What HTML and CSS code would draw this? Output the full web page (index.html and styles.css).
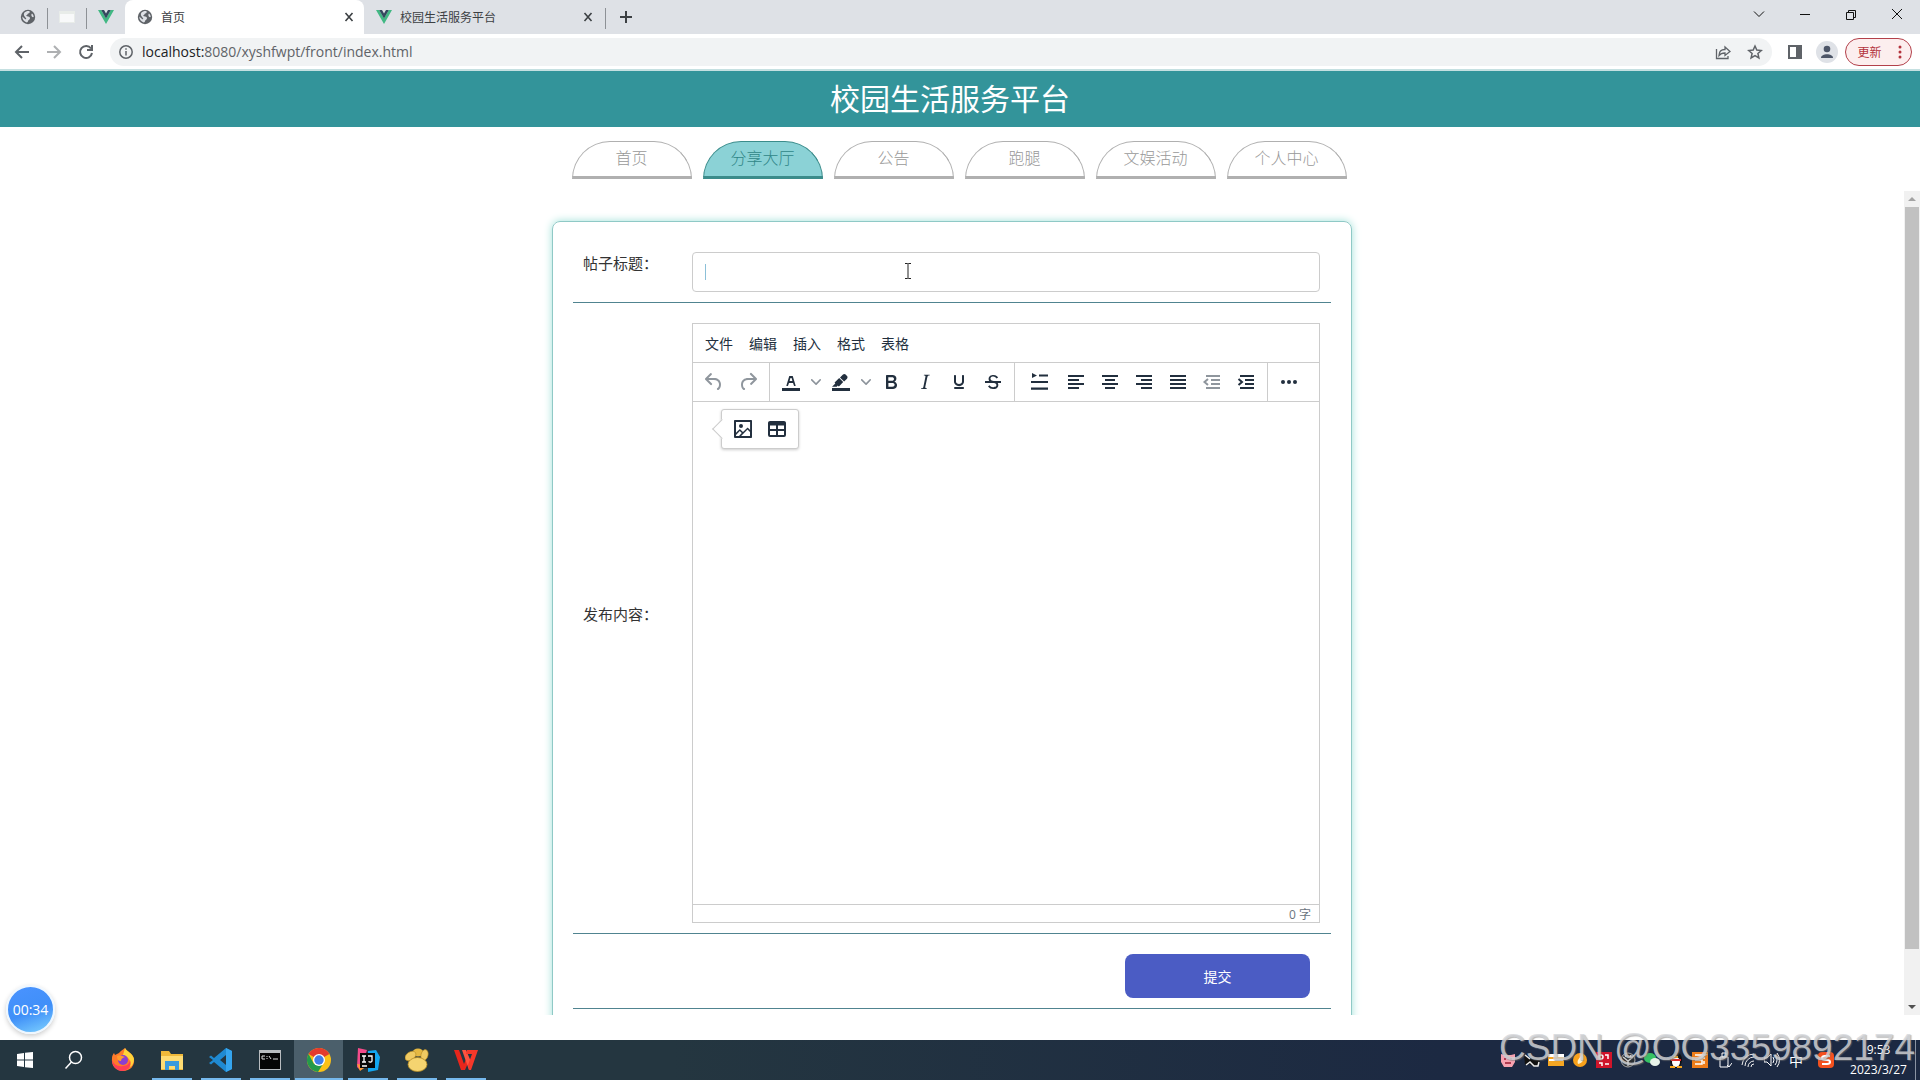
FILE: index.html
```html
<!DOCTYPE html>
<html lang="zh-CN">
<head>
<meta charset="utf-8">
<title>首页</title>
<link rel="stylesheet" href="styles.css">
</head>
<body>
<svg class="defs" aria-hidden="true">
  <symbol id="globe" viewBox="0 0 16 16"><circle cx="8" cy="8" r="7.200" fill="#5f6368"/><path d="M9.500 2.200c.8 1.200-.3 2-1.300 2.300-.8.300-.5 1.300-1.400 1.500-.8.200-.6 1 .2 1.200 1.500.2 3 .3 3 2 0 1.500-1.600 1.400-1.900 2.600-.2.900-.6 1.600-1.300 1.700C4 12.800 2.200 10.600 2.300 7.600L5 10c.8.600 1.400.2 1.200-.6L4.500 7.200C3.800 6.300 3.600 5 4.300 3.800 5.600 2.500 7.500 1.900 9.500 2.200z" fill="#dee1e6"/><path d="M12 4.500c1 .8 1.700 2 1.700 3.500-1 .5-2-.2-2.200-1.200-.2-.9-.2-1.700.5-2.300z" fill="#dee1e6"/></symbol>
  <symbol id="vue" viewBox="0 0 16 16"><path d="M0 1h3.200L8 9.300 12.800 1H16L8 15z" fill="#41b883"/><path d="M3.200 1H6l2 3.500L10 1h2.800L8 9.500z" fill="#34495e"/></symbol>
  <symbol id="close" viewBox="0 0 16 16"><path d="M4.500 4l7 8m0-8l-7 8" stroke="#3c4043" stroke-width="1.600" fill="none"/></symbol>
  <symbol id="chevron" viewBox="0 0 10 10"><path d="M8.700 2.200c.3-.3.8-.3 1 0 .4.400.4.900 0 1.200L5.700 7.800c-.3.300-.9.300-1.200 0L.2 3.400a.8.800 0 010-1.200c.3-.3.8-.3 1.100 0L5 6l3.700-3.800z"/></symbol>
</svg>

<header class="tabstrip">
  <div class="pinned"><svg><use href="#globe"/></svg></div>
  <div class="pinned"><svg viewBox="0 0 16 16"><path d="M0 2h16v12H0z" fill="#e8ece9"/><path d="M1 5h14v8H1z" fill="#f8f9fa"/></svg></div>
  <div class="pinned last"><svg><use href="#vue"/></svg></div>
  <div class="tab active"><svg><use href="#globe"/></svg><span>首页</span><button aria-label="关闭"><svg><use href="#close"/></svg></button></div>
  <div class="tab"><svg><use href="#vue"/></svg><span>校园生活服务平台</span><button aria-label="关闭"><svg><use href="#close"/></svg></button></div>
  <button class="newtab" aria-label="新标签页"><svg viewBox="0 0 16 16"><path d="M8 2v12M2 8h12" stroke="#3c4043" stroke-width="2"/></svg></button>
  <div class="winctl">
    <button aria-label="标签搜索"><svg viewBox="0 0 16 16"><path d="M3 5.500l5 5 5-5"/></svg></button>
    <button aria-label="最小化"><svg viewBox="0 0 16 16"><path d="M3 8.500h10"/></svg></button>
    <button aria-label="还原"><svg viewBox="0 0 16 16"><path d="M3.500 6.500h7v7h-7zM5.500 6.500v-2h7v7h-2"/></svg></button>
    <button aria-label="关闭窗口"><svg viewBox="0 0 16 16"><path d="M3 3l10 10M13 3L3 13"/></svg></button>
  </div>
</header>

<div class="toolbar">
  <button aria-label="后退"><svg viewBox="0 0 16 16"><path d="M15 8H2m6-6L2 8l6 6"/></svg></button>
  <button aria-label="前进" disabled><svg viewBox="0 0 16 16"><path d="M1 8h13M8 2l6 6-6 6"/></svg></button>
  <button aria-label="刷新"><svg viewBox="0 0 16 16"><path d="M13 4.500A6 6 0 1 0 14 9M14 1v5H9"/></svg></button>
  <div class="omnibox">
    <svg viewBox="0 0 16 16"><circle cx="8" cy="8" r="6.200"/><path d="M8 7v4.500M8 4.300v1.500"/></svg>
    <div class="url"><b>localhost:</b>8080/xyshfwpt/front/index.html</div>
    <svg viewBox="0 0 16 16"><path d="M1.500 5v9.500h11.500V12M4 11.500c0-4 2.500-6 6-6V3l5 4.500-5 4V9c-2.500 0-4.500.5-6 2.500z" stroke-width="1.300"/></svg>
    <svg viewBox="0 0 16 16"><path d="M8 2l1.800 4.100 4.500.4-3.400 3 1 4.400L8 11.600l-3.900 2.300 1-4.400-3.400-3 4.500-.4z"/></svg>
  </div>
  <button class="side" aria-label="侧边栏"><svg viewBox="0 0 16 16"><path d="M2 2h12v12H2z"/><path d="M10 2h4v12h-4z" fill="#5f6368"/></svg></button>
  <button class="profile" aria-label="用户"><svg viewBox="0 0 22 22"><circle cx="11" cy="11" r="11" fill="#dfe2e7"/><circle cx="11" cy="8" r="3.300" fill="#4d5668"/><path d="M5 17c0-5 12-5 12 0z" fill="#4d5668"/></svg></button>
  <button class="update"><span>更新</span><svg viewBox="0 0 4 16"><circle cx="2" cy="3" r="1.500"/><circle cx="2" cy="8" r="1.500"/><circle cx="2" cy="13" r="1.500"/></svg></button>
</div>

<main class="page">
  <h1>校园生活服务平台</h1>
  <nav class="nav">
    <a href="#">首页</a><a href="#" class="on">分享大厅</a><a href="#">公告</a><a href="#">跑腿</a><a href="#">文娱活动</a><a href="#">个人中心</a>
  </nav>
  <div class="frame">
    <form class="card">
      <div class="row title-row">
        <label for="post-title">帖子标题：</label>
        <div class="field"><input id="post-title" type="text"><i class="caret"></i>
          <svg class="ibeam" viewBox="0 0 8 18"><path d="M1 1.500h2.500l.5.500.5-.5H7M4 2v14M1 16.500h2.500l.5-.5.5.5H7" fill="none" stroke="#222"/></svg></div>
      </div>
      <div class="row body-row">
        <label for="post-body">发布内容：</label>
        <div class="editor">
          <div class="menubar"><button type="button">文件</button><button type="button">编辑</button><button type="button">插入</button><button type="button">格式</button><button type="button">表格</button></div>
          <div class="tools">
            <div class="group">
              <button type="button" disabled aria-label="撤销"><svg viewBox="0 0 24 24"><path d="M6.400 8H12c3.700 0 6.200 2 6.800 5.100.6 2.700-.4 5.600-2.300 6.800a1 1 0 01-1-1.800c1.100-.6 1.800-2.700 1.400-4.600-.5-2.100-2.100-3.500-4.900-3.500H6.400l3.300 3.300a1 1 0 11-1.400 1.400l-5-5a1 1 0 010-1.400l5-5a1 1 0 011.400 1.400L6.400 8z"/></svg></button>
              <button type="button" disabled aria-label="重做"><svg viewBox="0 0 24 24"><path d="M17.600 10H12c-2.800 0-4.400 1.400-4.900 3.500-.4 2 .3 4 1.400 4.600a1 1 0 11-1 1.800c-2-1.200-2.900-4.100-2.300-6.800.6-3 3-5.100 6.800-5.100h5.600l-3.300-3.300a1 1 0 111.400-1.400l5 5a1 1 0 010 1.400l-5 5a1 1 0 01-1.400-1.400l3.300-3.300z"/></svg></button>
            </div>
            <div class="group">
              <button type="button" aria-label="文字颜色"><svg viewBox="0 0 24 24"><path d="M3 18h18v3H3z"/><path d="M8.700 16h-.8a.5.500 0 01-.5-.6l2.700-9c.1-.3.3-.4.5-.4h2.800c.2 0 .4.100.5.400l2.700 9a.5.500 0 01-.5.600h-.8a.5.500 0 01-.4-.4l-.7-2.200c0-.3-.3-.4-.5-.4h-3.400c-.2 0-.4.100-.5.400l-.7 2.200c0 .3-.2.400-.4.400zm2.600-7.600l-.6 2a.5.500 0 00.5.600h1.600a.5.500 0 00.5-.6l-.6-2c0-.3-.3-.4-.5-.4h-.4c-.2 0-.4.100-.5.400z"/></svg></button>
              <button type="button" class="drop" aria-label="选择文字颜色"><svg><use href="#chevron"/></svg></button>
              <button type="button" aria-label="背景色"><svg viewBox="0 0 24 24"><path d="M3 18h18v3H3z"/><path d="M7.700 16.700H3l3.300-3.300-.7-.8L10.200 8l4 4.100-4 4.200c-.2.2-.6.2-.8 0l-.6-.7-1.100 1.100zm5-7.500L11 7.400l3-2.900a2 2 0 012.600 0L18 6c.7.7.7 2 0 2.700l-2.900 2.900-1.800-1.800-.5-.6"/></svg></button>
              <button type="button" class="drop" aria-label="选择背景色"><svg><use href="#chevron"/></svg></button>
              <button type="button" aria-label="粗体"><svg viewBox="0 0 24 24"><path d="M7.800 19c-.3 0-.5 0-.6-.2l-.2-.5V5.700c0-.2 0-.4.2-.5l.6-.2h5c1.500 0 2.700.3 3.500 1 .7.600 1.100 1.400 1.100 2.500a3 3 0 01-.6 1.900c-.4.600-1 1-1.600 1.200.4.100.9.300 1.300.6s.8.700 1 1.200c.4.400.5 1 .5 1.600 0 1.300-.4 2.300-1.300 3-.8.700-2.100 1-3.800 1H7.800zm5-8.300c.6 0 1.200-.1 1.600-.5.400-.3.600-.7.600-1.300 0-1.100-.8-1.700-2.300-1.700H9.300v3.500h3.400zm.5 6c.7 0 1.300-.1 1.700-.4.400-.4.600-.9.600-1.500s-.2-1-.7-1.400c-.4-.3-1-.4-2-.4H9.400v3.800h4z"/></svg></button>
              <button type="button" aria-label="斜体"><svg viewBox="0 0 24 24"><path d="M16.700 4.700l-.1.900h-.3c-.6 0-1 0-1.400.3-.3.300-.4.600-.5 1.100l-2.100 9.800v.6c0 .5.400.8 1.400.8h.2l-.2.800H8l.2-.8h.2c1.100 0 1.800-.5 2-1.500l2-9.800.1-.5c0-.6-.4-.8-1.400-.8h-.3l.2-.9h5.800z"/></svg></button>
              <button type="button" aria-label="下划线"><svg viewBox="0 0 24 24"><path d="M16 5c.6 0 1 .4 1 1v5.500a4 4 0 01-.4 1.800l-1 1.400a5.300 5.300 0 01-5.500 1 5 5 0 01-1.600-1c-.5-.4-.8-.9-1.100-1.400a4 4 0 01-.4-1.800V6c0-.6.4-1 1-1s1 .4 1 1v5.500c0 .3 0 .6.2 1l.6.700a3.300 3.300 0 002.200.8 3.400 3.400 0 002.200-.8c.3-.2.400-.5.600-.8l.2-.9V6c0-.6.4-1 1-1zM8 17h8c.6 0 1 .4 1 1s-.4 1-1 1H8a1 1 0 010-2z"/></svg></button>
              <button type="button" aria-label="删除线"><svg viewBox="0 0 24 24"><path d="M15.600 8.500c-.5-.7-1-1.100-1.300-1.300-.6-.4-1.300-.6-2-.6-2.700 0-2.800 1.700-2.800 2.100 0 1.600 1.800 2 3.200 2.300 4.400.9 4.600 2.800 4.600 3.900 0 1.400-.7 4.100-5 4.100A6.200 6.200 0 017 16.400l1.500-1.100c.4.600 1.600 2 3.700 2 1.600 0 2.500-.4 3-1.200.4-.8.3-2-.8-2.600-.7-.4-1.600-.7-2.900-1-1-.2-3.900-.8-3.900-3.600C7.600 6 10.300 5 12.400 5c2.900 0 4.200 1.600 4.700 2.400l-1.500 1.100z"/><path d="M4 11h16v2H4z"/></svg></button>
            </div>
            <div class="group">
              <button type="button" class="wide" aria-label="首行缩进"><svg viewBox="0 0 24 24"><path d="M5 3l5 2.500L5 8zM12 4.500h9v2h-9zM4 11h17v2H4zM4 17.500h17v2.200H4z"/></svg></button>
              <button type="button" aria-label="左对齐"><svg viewBox="0 0 24 24"><path d="M4 5h16v2H4zM4 9h11v2H4zM4 13h16v2H4zM4 17h11v2H4z"/></svg></button>
              <button type="button" aria-label="居中对齐"><svg viewBox="0 0 24 24"><path d="M4 5h16v2H4zM7 9h10v2H7zM4 13h16v2H4zM7 17h10v2H7z"/></svg></button>
              <button type="button" aria-label="右对齐"><svg viewBox="0 0 24 24"><path d="M4 5h16v2H4zM9 9h11v2H9zM4 13h16v2H4zM9 17h11v2H9z"/></svg></button>
              <button type="button" aria-label="两端对齐"><svg viewBox="0 0 24 24"><path d="M4 5h16v2H4zM4 9h16v2H4zM4 13h16v2H4zM4 17h16v2H4z"/></svg></button>
              <button type="button" disabled aria-label="减少缩进"><svg viewBox="0 0 24 24"><path d="M6 5h14v2H6zM11 9h9v2h-9zM11 13h9v2h-9zM6 17h14v2H6z"/><path d="M8 9l-3.500 3L8 15" fill="none" stroke="#222f3e" stroke-width="2"/></svg></button>
              <button type="button" aria-label="增加缩进"><svg viewBox="0 0 24 24"><path d="M6 5h14v2H6zM11 9h9v2h-9zM11 13h9v2h-9zM6 17h14v2H6z"/><path d="M4.500 9L8 12l-3.500 3" fill="none" stroke="#222f3e" stroke-width="2"/></svg></button>
            </div>
            <div class="group">
              <button type="button" aria-label="更多"><svg viewBox="0 0 24 24"><circle cx="6" cy="12" r="2"/><circle cx="12" cy="12" r="2"/><circle cx="18" cy="12" r="2"/></svg></button>
            </div>
          </div>
          <div class="canvas">
            <textarea id="post-body"></textarea>
            <div class="quick">
              <button type="button" aria-label="插入图片"><svg viewBox="0 0 24 24"><path fill-rule="evenodd" d="M5 15.700l3.300-3.200c.3-.3.7-.3 1 0L12 15l4.100-4c.3-.4.8-.4 1 0l2 1.900V5H5v10.700zM5 18V19h3l2.800-2.900-2-2L5 17.900zm14-3l-2.500-2.400-6.400 6.500H19v-4zM4 3h16c.6 0 1 .4 1 1v16c0 .6-.4 1-1 1H4a1 1 0 01-1-1V4c0-.6.4-1 1-1zm6 8a2 2 0 100-4 2 2 0 000 4z"/></svg></button>
              <button type="button" aria-label="插入表格"><svg viewBox="0 0 24 24"><path fill-rule="evenodd" d="M5 4h14c1.100 0 2 .9 2 2v12a2 2 0 01-2 2H5a2 2 0 01-2-2V6c0-1.100.9-2 2-2zM5 14v4h6v-4zM13 14v4h6v-4zM5 8.500V12h6V8.500zM13 8.500V12h6V8.500z"/></svg></button>
            </div>
          </div>
          <div class="status">0 字</div>
        </div>
      </div>
      <div class="row submit-row"><button type="submit">提交</button></div>
    </form>
    <div class="scrollbar"><i class="arrow up"></i><i class="thumb"></i><i class="arrow down"></i></div>
  </div>
</main>

<footer class="taskbar">
  <div class="apps">
    <button aria-label="开始"><svg viewBox="0 0 24 24"><path d="M4 6l7-1v6.500H4zM12 4.800L20 4v7.500h-8zM4 12.500h7V19l-7-1zM12 12.500h8V20l-8-.8z" fill="#fff"/></svg></button>
    <button aria-label="搜索"><svg viewBox="0 0 24 24"><circle cx="13.500" cy="9.500" r="6" fill="none" stroke="#fff" stroke-width="1.500"/><path d="M9.500 14l-6 6.500" stroke="#fff" stroke-width="1.500"/></svg></button>
    <button aria-label="Firefox"><svg viewBox="0 0 24 24"><path d="M14 0c1 3 8 5 9 11 1 7-4 12-11 12S0 18 1 10c0-2 1-4 2-5l1 2 4-2c1-2 4-3 6-5z" fill="#ff7a2a"/><path d="M14 0c1 3 8 5 9 11 0 4-2 7-4 8 2-7-2-10-7-12z" fill="#ffd43a"/><path d="M1 12c2 5 6 7 11 6 4 0 7-3 7-6 2 7-3 11-8 11S1 18 1 12z" fill="#ff3f56"/><circle cx="12" cy="12" r="5" fill="#8b3fd0"/><path d="M6 8c3-1 5 0 8 1-3 1-4 2-4 4-3 0-4-2-4-5z" fill="#ff9b2c"/></svg></button>
    <button class="open" aria-label="文件资源管理器"><svg viewBox="0 0 24 24"><path d="M1 3h8l2 3h12v16H1z" fill="#f0b93a"/><path d="M1 8h22v13H1z" fill="#ffdc73"/><path d="M5 13h14v9h-4v-4H9v4H5z" fill="#3b9bdc"/></svg></button>
    <button class="open" aria-label="VS Code"><svg viewBox="0 0 24 24"><path d="M17 0l6 3v18l-6 3L5 14l-3 2.500L0 15l4-3-4-3 2-1.500L5 10zM17 7l-6 5 6 5z" fill="#1f8ad2"/><path d="M17 0l6 3v18l-6 3z" fill="#35a5ee"/></svg></button>
    <button class="open" aria-label="命令提示符"><svg viewBox="0 0 24 24"><path d="M1 2h22v20H1z" fill="#b9bdc0"/><path d="M2 5h20v16H2z" fill="#050505"/><path d="M7 8H4v3h3M9 8v1m0 1v1M11 8l2 3M15 11h5" stroke="#ddd" fill="none"/></svg></button>
    <button class="open current" aria-label="Chrome"><svg viewBox="0 0 24 24"><circle cx="12" cy="12" r="12" fill="#fbc116"/><path d="M12 12L1.600 6a12 12 0 0120.800 0z" fill="#e33b2e"/><path d="M12 12L7 16 1.600 6a12 12 0 009.400 18l5-8z" fill="#249a4b"/><circle cx="12" cy="12" r="6" fill="#fff"/><circle cx="12" cy="12" r="4.700" fill="#3f7ee8"/></svg></button>
    <button class="open" aria-label="IntelliJ IDEA"><svg viewBox="0 0 24 24"><path d="M2 0l9 2-7 20-3-3z" fill="#f44b8a"/><path d="M12 3l8-1 4 7-2 13-10 2z" fill="#12a6f0"/><path d="M1 16l10 2-7 5z" fill="#ff9a35"/><path d="M4 5h15v15H4z" fill="#080808"/><path d="M6 8h4M8 8v6M6 14h4M12 8h4v5c0 1-2 1.500-3.500.5M6 18h5" stroke="#fff" stroke-width="1.300" fill="none"/></svg></button>
    <button class="open" aria-label="数据库工具"><svg viewBox="0 0 24 24"><ellipse cx="13" cy="4.500" rx="5.500" ry="4" fill="#e5b842"/><ellipse cx="5.500" cy="8" rx="6" ry="4" transform="rotate(-35 5.500 8)" fill="#efca62" stroke="#b58a22" stroke-width=".6"/><ellipse cx="19.500" cy="7" rx="3.500" ry="5.500" transform="rotate(15 19.500 7)" fill="#efca62" stroke="#b58a22" stroke-width=".6"/><ellipse cx="12.500" cy="16.500" rx="9.500" ry="7" fill="#f5d470" stroke="#b58a22" stroke-width=".8"/></svg></button>
    <button class="open" aria-label="WPS"><svg viewBox="0 0 24 24"><path d="M0 2h5l5 14 2-5 2 4-3 7H7z" fill="#e8261c"/><path d="M8 2h4l6 14-2 6h-1z" fill="#ff5340"/><path d="M13 2h11l-7 20h-2l-1-5 4-11h-6z" fill="#f5382a"/></svg></button>
  </div>
  <div class="tray">
    <svg viewBox="0 0 16 16"><path d="M1 2l4 1h6l4-1v8l-3 5H4l-3-5z" fill="#f7a2b0"/><path d="M4 7h2m4 0h2M5 11h6" stroke="#b03c50" stroke-width="2"/></svg>
    <svg viewBox="0 0 16 16"><path d="M0 2l6 4 9-1 1 7-5 3-6-3-4 1z" fill="#111"/><path d="M1 3l5 4M2 13l4-3 4 4h4l1-4" stroke="#eee" stroke-width="1.500" fill="none"/></svg>
    <svg viewBox="0 0 16 16"><path d="M0 2h16v12H0z" fill="#f5a623"/><path d="M0 2h16v3H0zM1 7h14v2H1z" fill="#fff"/></svg>
    <svg viewBox="0 0 16 16"><circle cx="8" cy="8" r="7" fill="#f9a11b"/><path d="M10 1c0 4-6 6-4 11 5-1 7-5 4-11z" fill="#fff3cf"/></svg>
    <svg viewBox="0 0 16 16"><path d="M0 0h16v16H0z" fill="#d0142a"/><circle cx="5" cy="5" r="2" fill="none" stroke="#fff" stroke-width="1.500"/><path d="M9 3h3v4M3 11h3v3M9 12h4" stroke="#fff" stroke-width="1.500" fill="none"/></svg>
    <svg viewBox="0 0 16 16"><circle cx="8" cy="8" r="7" fill="#2b2f33" stroke="#aaa"/><path d="M3 5l5 4 5-4M8 9v5M5 3l1 2m5-2l-1 2" stroke="#ccc" stroke-width="1.500" fill="none"/></svg>
    <svg viewBox="0 0 16 16"><ellipse cx="6" cy="6" rx="6" ry="5" fill="#37c265"/><ellipse cx="11" cy="10" rx="5" ry="4" fill="#e8f3ea"/></svg>
    <svg viewBox="0 0 16 16"><ellipse cx="8" cy="8" rx="6" ry="8" fill="#111"/><ellipse cx="8" cy="10" rx="4" ry="5" fill="#fff"/><path d="M3 7h10v2H3z" fill="#e02c2c"/><path d="M2 14h5v2H2zM9 14h5v2H9zM6 4h4v2H6z" fill="#f6a41c"/></svg>
    <svg viewBox="0 0 16 16"><path d="M0 0h16v16H0z" fill="#ef7d1a"/><path d="M3 3h10L8 6h5M3 8h7v4H3M12 9v3" stroke="#fff" stroke-width="1.500" fill="none"/></svg>
    <svg viewBox="0 0 16 16"><path d="M4 5h8v10H4zM6 1h4v4H6zM11 13l2 2 3-4" stroke="#fff" fill="none"/></svg>
    <svg viewBox="0 0 16 16"><path d="M2 13A12 12 0 0114 2M5 14a9 9 0 019-9M8 15a6 6 0 016-6M11 15a3 3 0 013-3" stroke="#eee" fill="none"/></svg>
    <svg viewBox="0 0 16 16"><path d="M0 6h3l4-4v12l-4-4H0zM9 5q2 3 0 6M11 3q4 5 0 10M13 1q5 7 0 14" stroke="#fff" fill="none"/></svg>
    <span class="ime">中</span>
    <svg class="sogou" viewBox="0 0 16 16"><rect width="16" height="16" rx="4" fill="#f4511e"/><path d="M12 4H7C3 4 3 8 7 8h2c4 0 4 4 0 4H4" stroke="#fff" stroke-width="2" fill="none"/></svg>
    <div class="clock"><span>9:53</span><span>2023/3/27</span></div>
  </div>
</footer>
<div class="timer">00:34</div>
<div class="watermark">CSDN @OO3359892174</div>
</body>
</html>
```
FILE: styles.css
```css
* { box-sizing: border-box; }
body {
  margin: 0;
  height: 100vh;
  display: flex;
  flex-direction: column;
  overflow: hidden;
  background: #fff;
  font-family: "Open Sans", "Noto Sans CJK SC", sans-serif;
  font-size: 14px;
  color: #222f3e;
}
button { border: 0; padding: 0; background: none; font: inherit; color: inherit; }
svg { display: block; flex: none; }
.defs { position: absolute; width: 0; height: 0; }

/* browser chrome */
.tabstrip { display: flex; height: 34px; background: #dee1e6; font-size: 12px; color: #3c4043; }
.tabstrip svg { width: 16px; height: 16px; }
.pinned { display: flex; align-items: center; justify-content: center; width: 39px; }
.pinned:first-child { width: 48px; padding-left: 8px; }
.pinned.last { width: 38px; }
.pinned:not(.last) { border-right: 1px solid #8d9196; border-image: linear-gradient(transparent 24%, #8d9196 24%, #8d9196 82%, transparent 82%) 1; }
.tab { display: flex; align-items: center; gap: 8px; width: 239px; padding: 0 7px 0 12px; }
.tab.active { background: #fff; border-radius: 8px 8px 0 0; }
.tab span { flex: 1; }
.newtab { width: 40px; display: flex; align-items: center; justify-content: center; margin-left: 2px; border-left: 1px solid #8d9196; border-image: linear-gradient(transparent 24%, #8d9196 24%, #8d9196 82%, transparent 82%) 1; }
.newtab svg { width: 16px; }
.winctl { display: flex; margin-left: auto; height: 28px; }
.winctl button { width: 46px; display: flex; align-items: center; justify-content: center; }
.winctl path { fill: none; stroke: #111; }
.toolbar { display: flex; align-items: center; height: 37px; padding: 0 8px 0 6px; border-bottom: 2px solid #c5e0e1; }
.toolbar button { display: flex; align-items: center; justify-content: center; width: 32px; height: 28px; }
.toolbar svg { width: 16px; height: 16px; fill: none; stroke: #5f6368; stroke-width: 2; }
.toolbar button:disabled { opacity: .5; }
.omnibox { display: flex; flex: 1; align-items: center; gap: 16px; height: 28px; margin-left: 8px; padding: 0 9px 0 8px; border-radius: 14px; background: #f1f3f4; }
.omnibox svg { width: 16px; stroke-width: 1.5; }
.url { flex: 1; margin-left: -8px; color: #5f6368; font-size: 14px; }
.url b { font-weight: 400; color: #202124; }
.toolbar .side { margin-left: 7px; }
.toolbar .profile svg { width: 22px; height: 22px; stroke: none; }
.toolbar .update { width: 67px; margin-left: 2px; gap: 16px; border: 1px solid #b3404a; border-radius: 14px; background: #fceeee; color: #b3333c; font-size: 12px; padding-left: 2px; }
.toolbar .update svg { width: 4px; fill: #b3333c; stroke: none; }

/* page */
.page { flex: 1; min-height: 0; display: flex; flex-direction: column; }
h1 { margin: 0; height: 56px; padding-right: 20px; line-height: 56px; text-align: center; background: #33949a; color: #fff; font-size: 30px; font-weight: 400; }
.nav { display: flex; justify-content: center; gap: 11px; padding: 14px 2px 12px 0; }
.nav a { width: 120px; height: 38px; line-height: 32px; text-align: center; font-size: 16px; font-weight: 300; color: #999; text-decoration: none; border: 1px solid #b0b0b0; border-bottom-width: 3px; border-radius: 40px 40px 0 0; }
.nav a.on { background: #8bd2d6; border-color: #3b8c8b; color: #2f8587; }
.frame { flex: 1; min-height: 0; display: flex; margin-bottom: 25px; overflow: hidden; }
.card { width: 800px; height: 900px; margin: 30px auto 0; padding: 15px 20px; border: 1px solid #8fc9c6; border-radius: 8px; box-shadow: 0 0 8px #9fe0d8; }
.row { display: flex; border-bottom: 1px solid #508490; padding: 15px 11px 10px 10px; font-size: 15px; }
.row label { width: 109px; flex: none; color: #333; }
.title-row label { line-height: 22px; }
.title-row { height: 66px; }
.field { position: relative; flex: 1; }
.field input { width: 100%; height: 40px; border: 1px solid #ccc; border-radius: 4px; padding: 0 12px; font-size: 14px; outline: 0; }
.caret { position: absolute; left: 13px; top: 12px; width: 1px; height: 16px; background: #8cc0d8; }
.ibeam { position: absolute; left: 212px; top: 10px; width: 8px; height: 18px; }
.body-row { align-items: center; padding-top: 20px; }
.body-row label { padding-bottom: 20px; }
.editor { flex: 1; height: 600px; display: flex; flex-direction: column; border: 1px solid #ccc; }
.menubar { display: flex; height: 38px; padding-left: 4px; }
.menubar button { padding: 0 8px; font-size: 14px; }
.tools { display: flex; height: 40px; border: solid #ccc; border-width: 1px 0; }
.group { display: flex; align-items: center; padding: 0 4px; border-right: 1px solid #ccc; }
.group:last-child { border: 0; }
.group button, .quick button { width: 34px; height: 34px; display: flex; align-items: center; justify-content: center; }
.group svg, .quick svg { width: 24px; height: 24px; fill: #222f3e; }
.group button:disabled { opacity: .5; }
.group .drop { width: 16px; }
.group .drop svg { width: 10px; height: 10px; fill: #8c939b; }
.group .wide { width: 40px; }
.canvas { flex: 1; position: relative; }
textarea { display: block; width: 100%; height: 100%; border: 0; resize: none; outline: 0; padding: 16px; }
.quick { position: absolute; left: 28px; top: 7px; display: flex; align-items: center; height: 40px; padding: 0 4px; background: #fff; border: 1px solid #ccc; border-radius: 3px; box-shadow: 0 1px 3px #0003; }
.quick::before { content: ""; position: absolute; left: -7px; top: 12px; width: 13px; height: 13px; background: #fff; border: solid #ccc; border-width: 0 0 1px 1px; transform: rotate(45deg); }
.quick button { position: relative; }
.status { height: 18px; line-height: 20px; border-top: 1px solid #ccc; padding-right: 8px; text-align: right; font-size: 12px; color: #6b747e; }
.submit-row { justify-content: flex-end; padding: 20px 21px 10px; }
.submit-row button { width: 185px; height: 44px; border-radius: 8px; background: #4b5cc4; color: #fff; font-size: 14px; }
.scrollbar { display: flex; flex-direction: column; align-items: center; width: 16px; background: #f1f1f1; }
.arrow { height: 16px; display: flex; align-items: center; }
.arrow::before { content: ""; border: 4px solid transparent; }
.up::before { border-bottom-color: #a3a3a3; border-top: 0; }
.down::before { border-top-color: #505050; border-bottom: 0; }
.thumb { flex: none; width: 14px; height: 90%; background: #c1c1c1; margin-bottom: auto; }

/* desktop taskbar and overlays */
.taskbar { display: flex; justify-content: space-between; height: 40px; background: linear-gradient(90deg, #243640, #243640 35%, #1c2942 75%); color: #fff; }
.apps, .tray { display: flex; }
.apps button { display: flex; align-items: center; justify-content: center; width: 49px; }
.apps svg { width: 24px; height: 24px; }
.apps .open { background: linear-gradient(#76b9ed, #76b9ed) center bottom / 40px 2px no-repeat; }
.apps .current { background: linear-gradient(#76b9ed, #76b9ed) center bottom / 48px 2px no-repeat, #4b5f6b; }
.tray { align-items: center; gap: 8px; padding-right: 4px; }
.tray svg { width: 16px; height: 16px; }
.ime { width: 16px; text-align: center; font-size: 14px; }
.tray .sogou { margin-left: 6px; }
.clock { display: flex; flex-direction: column; align-items: center; width: 74px; height: 40px; border-right: 1px solid #8a93a3; font-size: 12px; line-height: 20px; }
.timer { position: absolute; left: 6px; bottom: 46px; width: 49px; height: 49px; border: 2px solid #eef7ff; border-radius: 50%; background: linear-gradient(160deg, #4a93ff, #3f8ff8 55%, #7fd3ff); box-shadow: 0 2px 5px #0003; color: #fff; font-size: 14px; line-height: 46px; text-align: center; }
.watermark { position: absolute; right: 5px; bottom: 12px; font-family: "Liberation Sans", sans-serif; font-size: 37px; line-height: 40px; color: #d4d6dacc; text-shadow: 1px 1px 1px #7778; white-space: nowrap; }
```
